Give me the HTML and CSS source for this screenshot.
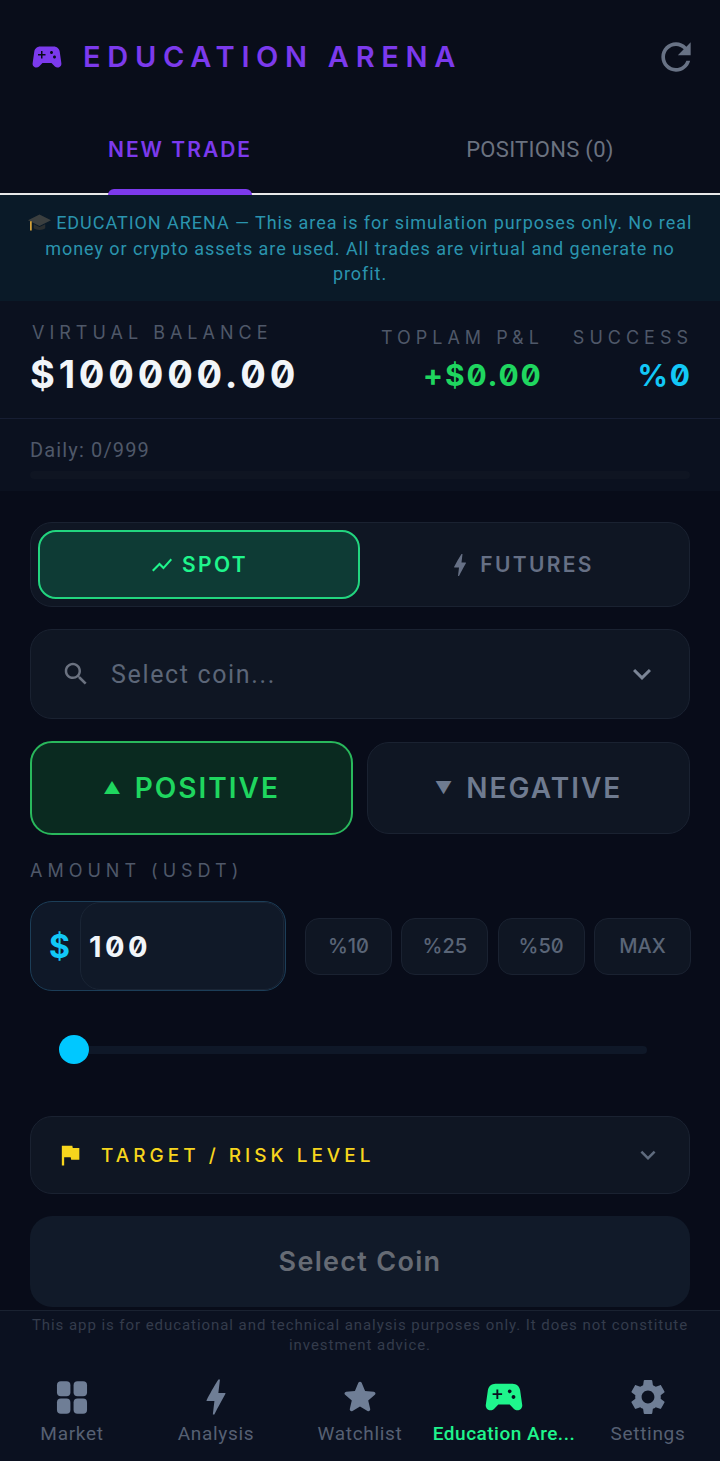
FILE: index.html
```html
<!DOCTYPE html>
<html lang="en">
<head>
    <meta charset="UTF-8">
    <meta name="viewport" content="width=device-width, initial-scale=1.0">
    <title>Education Arena</title>
    <link rel="stylesheet" href="styles.css">
</head>
<body>
    <div class="app">
        <header class="topbar">
            <div class="brand">
                <svg class="brand-icon" viewBox="0 0 24 24"><path d="M21.58 16.09l-1.09-7.66C20.21 6.46 18.52 5 16.53 5H7.47C5.48 5 3.79 6.46 3.51 8.43l-1.09 7.66C2.2 17.63 3.39 19 4.94 19c.68 0 1.32-.27 1.8-.75L9 16h6l2.25 2.25c.48.48 1.13.75 1.8.75 1.56 0 2.75-1.37 2.53-2.91zM11 11H9v2H8v-2H6v-1h2V8h1v2h2v1zm4-1c-.55 0-1-.45-1-1s.45-1 1-1 1 .45 1 1-.45 1-1 1zm2 3c-.55 0-1-.45-1-1s.45-1 1-1 1 .45 1 1-.45 1-1 1z"/></svg>
                <h1>EDUCATION ARENA</h1>
            </div>
            <svg class="refresh" viewBox="0 0 24 24"><path d="M17.65 6.35C16.2 4.9 14.21 4 12 4c-4.42 0-7.99 3.58-7.99 8s3.57 8 7.99 8c3.73 0 6.84-2.55 7.73-6h-2.08c-.82 2.33-3.04 4-5.65 4-3.31 0-6-2.69-6-6s2.69-6 6-6c1.66 0 3.14.69 4.22 1.78L13 11h7V4l-2.35 2.35z"/></svg>
        </header>

        <nav class="tabs">
            <div class="tab tab-active"><span class="tab-label">NEW TRADE</span></div>
            <div class="tab"><span class="tab-label">POSITIONS (0)</span></div>
        </nav>

        <div class="notice">
            <svg class="cap" viewBox="0 0 20 20"><path d="M10 3 20 8l-10 5L0 8z" fill="#3b3f3f"/><path d="M5 11.5V15c2.500 2 7.500 2 10 0v-3.500l-5 2.500z" fill="#2b2f30"/><path d="M2.500 9v8" stroke="#d9a43a" stroke-width="1.500" fill="none"/></svg>
            EDUCATION ARENA — This area is for simulation purposes only. No real money or crypto assets are used. All trades are virtual and generate no profit.
        </div>

        <section class="stats">
            <div class="stat stat-main">
                <div class="stat-label">VIRTUAL BALANCE</div>
                <div class="balance">$100000.00</div>
            </div>
            <div class="stat stat-side">
                <div class="stat-label">TOPLAM P&amp;L</div>
                <div class="stat-value green">+$0.00</div>
            </div>
            <div class="stat stat-side">
                <div class="stat-label">SUCCESS</div>
                <div class="stat-value cyan">%0</div>
            </div>
        </section>

        <section class="daily">
            <div class="daily-text">Daily: 0/999</div>
            <div class="daily-bar"></div>
        </section>

        <main class="trade">
            <div class="segment">
                <div class="segment-item segment-active">
                    <svg class="seg-icon" viewBox="0 0 24 24"><path d="M3.500 18.490l6-6.010 4 4L22 6.920l-1.410-1.410-7.090 7.970-4-4L2 16.990z"/></svg>
                    SPOT
                </div>
                <div class="segment-item">
                    <svg class="seg-icon" viewBox="0 0 24 24"><path d="M11 23h-1l1-8.500H6.500c-.58 0-.57-.32-.38-.66.19-.34.05-.08.07-.12C8 10.500 10.500 5.500 13.500 1h1l-1 8.500h4c.49 0 .56.33.47.51l-.07.15C13.500 18 11 23 11 23z"/></svg>
                    FUTURES
                </div>
            </div>

            <div class="coin-select">
                <svg class="search-icon" viewBox="0 0 24 24"><path d="M15.500 14h-.79l-.28-.27C15.410 12.590 16 11.110 16 9.500 16 5.910 13.090 3 9.500 3S3 5.910 3 9.500 5.910 16 9.500 16c1.610 0 3.090-.59 4.230-1.570l.27.28v.79l5 4.990L20.490 19l-4.990-5zm-6 0C7.010 14 5 11.990 5 9.500S7.010 5 9.500 5 14 7.010 14 9.500 11.990 14 9.500 14z"/></svg>
                <span class="coin-placeholder">Select coin...</span>
                <svg class="chevron" viewBox="0 0 24 24"><path d="M7.410 8.590L12 13.170l4.590-4.580L18 10l-6 6-6-6z"/></svg>
            </div>

            <div class="direction">
                <div class="dir-btn dir-active"><span class="arrow">▲</span>POSITIVE</div>
                <div class="dir-btn"><span class="arrow">▼</span>NEGATIVE</div>
            </div>

            <div class="amount-label">AMOUNT (USDT)</div>
            <div class="amount-row">
                <div class="amount-box">
                    <span class="amount-prefix">$</span>
                    <div class="amount-input">100</div>
                </div>
                <div class="chips">
                    <div class="chip">%10</div>
                    <div class="chip">%25</div>
                    <div class="chip">%50</div>
                    <div class="chip chip-max">MAX</div>
                </div>
            </div>

            <div class="slider">
                <div class="slider-thumb"></div>
                <div class="slider-track"></div>
            </div>

            <div class="risk">
                <svg class="flag" viewBox="0 0 24 24"><path d="M14.400 6L14 4H5v17h2v-7h5.600l.4 2h7V6z"/></svg>
                <span class="risk-label">TARGET / RISK LEVEL</span>
                <svg class="chevron chevron-risk" viewBox="0 0 24 24"><path d="M7.410 8.590L12 13.170l4.590-4.580L18 10l-6 6-6-6z"/></svg>
            </div>

            <div class="submit">Select Coin</div>
        </main>

        <footer class="footer">
            <p class="disclaimer">This app is for educational and technical analysis purposes only. It does not constitute investment advice.</p>
            <div class="bottom-nav">
                <div class="nav-item">
                    <svg class="nav-icon" viewBox="0 0 24 24"><rect x="2.500" y="2" width="8.500" height="9.500" rx="2.500"/><rect x="13" y="2" width="8.500" height="9.500" rx="2.500"/><rect x="2.500" y="13" width="8.500" height="9.500" rx="2.500"/><rect x="13" y="13" width="8.500" height="9.500" rx="2.500"/></svg>
                    <span>Market</span>
                </div>
                <div class="nav-item">
                    <svg class="nav-icon" viewBox="0 0 24 24"><path d="M11 23h-1l1-8.500H6.500c-.58 0-.57-.32-.38-.66.19-.34.05-.08.07-.12C8 10.500 10.500 5.500 13.500 1h1l-1 8.500h4c.49 0 .56.33.47.51l-.07.15C13.500 18 11 23 11 23z"/></svg>
                    <span>Analysis</span>
                </div>
                <div class="nav-item">
                    <svg class="nav-icon" viewBox="1.500 1.500 21 21"><path d="M12 17.270l4.150 2.510c.76.46 1.690-.22 1.490-1.080l-1.100-4.720 3.670-3.180c.67-.58.31-1.680-.57-1.750l-4.830-.41-1.890-4.460c-.34-.81-1.500-.81-1.840 0L9.190 8.630l-4.830.41c-.88.07-1.240 1.170-.57 1.750l3.670 3.180-1.100 4.720c-.2.86.73 1.540 1.490 1.080l4.150-2.500z"/></svg>
                    <span>Watchlist</span>
                </div>
                <div class="nav-item nav-active">
                    <svg class="nav-icon" viewBox="2 2 20 20"><path d="M21.580 16.090l-1.090-7.660C20.210 6.460 18.520 5 16.530 5H7.470C5.480 5 3.790 6.460 3.510 8.430l-1.090 7.660C2.200 17.630 3.390 19 4.940 19c.68 0 1.320-.27 1.800-.75L9 16h6l2.250 2.250c.48.48 1.130.75 1.800.75 1.560 0 2.750-1.370 2.530-2.910zM11 11H9v2H8v-2H6v-1h2V8h1v2h2v1zm4-1c-.55 0-1-.45-1-1s.45-1 1-1 1 .45 1 1-.45 1-1 1zm2 3c-.55 0-1-.45-1-1s.45-1 1-1 1 .45 1 1-.45 1-1 1z"/></svg>
                    <span>Education Are...</span>
                </div>
                <div class="nav-item">
                    <svg class="nav-icon" viewBox="1.300 1.300 21.400 21.400"><path d="M19.140 12.940c.04-.3.06-.61.06-.94 0-.32-.02-.64-.07-.94l2.030-1.580c.18-.14.23-.41.12-.61l-1.920-3.320c-.12-.22-.37-.29-.59-.22l-2.390.96c-.5-.38-1.030-.7-1.620-.94l-.36-2.540c-.04-.24-.24-.41-.48-.41h-3.840c-.24 0-.43.17-.47.41l-.36 2.540c-.59.24-1.130.57-1.620.94l-2.390-.96c-.22-.08-.47 0-.59.22L2.740 8.870c-.12.21-.08.47.12.61l2.030 1.580c-.05.3-.09.63-.09.94s.02.64.07.94l-2.030 1.580c-.18.14-.23.41-.12.61l1.920 3.320c.12.22.37.29.59.22l2.390-.96c.5.38 1.030.7 1.620.94l.36 2.540c.05.24.24.41.48.41h3.840c.24 0 .44-.17.47-.41l.36-2.540c.59-.24 1.130-.56 1.620-.94l2.390.96c.22.08.47 0 .59-.22l1.920-3.320c.12-.22.07-.47-.12-.61l-2.010-1.580zM12 15.600c-1.980 0-3.600-1.620-3.600-3.600s1.620-3.600 3.600-3.600 3.600 1.620 3.600 3.600-1.620 3.600-3.600 3.600z"/></svg>
                    <span>Settings</span>
                </div>
            </div>
        </footer>
    </div>
</body>
</html>
```

FILE: styles.css
```css
:root {
    --bg: #090d1a;
    --card: #0f1623;
    --card-border: #1a2231;
    --purple: #7c3aed;
    --green: #1fd65f;
    --mint: #1ff58c;
    --cyan: #12c8f7;
    --yellow: #f7d51d;
}

* {
    box-sizing: border-box;
}

body {
    margin: 0;
    background: var(--bg);
    font-family: Roboto, "Liberation Sans", sans-serif;
}

.app {
    width: 720px;
    height: 1461px;
    overflow: hidden;
    display: flex;
    flex-direction: column;
}

/* shared "tech" look: wide, slashed zero */
h1, .tab-active .tab-label, .stat-label, .balance, .stat-value, .segment-item, .dir-btn,
.amount-label, .amount-prefix, .amount-input, .chip, .risk-label, .submit {
    font-family: Inter, "DejaVu Sans", sans-serif;
    font-feature-settings: "zero";
}

.topbar {
    height: 113px;
    padding: 0 22px 0 29px;
    display: flex;
    align-items: center;
    justify-content: space-between;
}

.brand {
    display: flex;
    align-items: center;
    gap: 18px;
}

.brand-icon {
    width: 36px;
    height: 36px;
    fill: var(--purple);
}

h1 {
    margin: 0;
    font-size: 29px;
    font-weight: 600;
    letter-spacing: 6.700px;
    color: var(--purple);
}

.refresh {
    width: 44px;
    height: 44px;
    fill: #687285;
}

.tabs {
    height: 82px;
    display: flex;
    border-bottom: 2px solid #e8e8e8;
}

.tab {
    flex: 1;
    display: flex;
    justify-content: center;
}

.tab-label {
    height: 82px;
    padding-top: 24px;
    font-size: 22px;
    letter-spacing: 0.300px;
    color: #6b7280;
}

.tab-active .tab-label {
    display: flex;
    flex-direction: column;
    font-size: 21px;
    font-weight: 600;
    letter-spacing: 2px;
    padding-top: 24px;
    color: var(--purple);
}

.tab-active .tab-label::after {
    content: "";
    height: 6px;
    margin-top: auto;
    background: var(--purple);
    border-radius: 6px 6px 0 0;
}

.notice {
    height: 106px;
    padding: 15px 24px 0;
    background: #0a1a28;
    color: #2a94ae;
    font-size: 18px;
    line-height: 25.500px;
    letter-spacing: 0.950px;
    text-align: center;
}

.cap {
    width: 23px;
    height: 23px;
    vertical-align: -5px;
}

.stats {
    height: 118px;
    padding: 0 30px 0;
    background: #0b111f;
    border-bottom: 1px solid #171e33;
    display: flex;
    align-items: flex-start;
}

.stat-main {
    flex: 1;
    padding-top: 21px;
}

.stat-main .stat-label {
    padding-left: 2px;
}

.stat-side {
    margin-left: 32px;
    padding-top: 26px;
    text-align: right;
}

.stat-label {
    font-size: 18px;
    font-weight: 400;
    letter-spacing: 5px;
    color: #4f5869;
}

.stat-side .stat-label {
    margin-right: -3px;
}

.balance {
    margin-top: 8px;
    font-size: 38px;
    font-weight: 700;
    letter-spacing: 3.800px;
    color: #f1f5f9;
}

.stat-value {
    margin: 11px -1.800px 0 0;
    font-size: 30px;
    font-weight: 700;
    line-height: 32px;
    letter-spacing: 1.800px;
}

.green {
    color: var(--green);
}

.cyan {
    color: var(--cyan);
}

.daily {
    height: 72px;
    padding: 18px 30px 0;
    background: #0b111f;
}

.daily-text {
    font-size: 20px;
    line-height: 26px;
    letter-spacing: 1.150px;
    color: #4f5869;
}

.daily-bar {
    height: 8px;
    margin-top: 8px;
    background: #0f1522;
    border-radius: 4px;
}

.trade {
    flex: 1;
    padding: 31px 30px 0;
    background: #080c19;
    display: flex;
    flex-direction: column;
}

.segment {
    height: 85px;
    padding: 7px;
    display: flex;
    background: var(--card);
    border: 1px solid var(--card-border);
    border-radius: 22px;
}

.segment-item {
    flex: 0 0 322px;
    display: flex;
    align-items: center;
    justify-content: center;
    gap: 8px;
    font-size: 21px;
    font-weight: 600;
    letter-spacing: 2.300px;
    color: #667085;
}

.seg-icon {
    width: 24px;
    height: 24px;
    fill: currentColor;
}

.segment-active {
    color: var(--mint);
    background: #0e3b35;
    border: 2px solid #22d57f;
    border-radius: 18px;
}

.coin-select {
    height: 90px;
    margin-top: 22px;
    padding: 0 29px 0 30px;
    display: flex;
    align-items: center;
    background: var(--card);
    border: 1px solid var(--card-border);
    border-radius: 22px;
}

.search-icon {
    width: 30px;
    height: 30px;
    fill: #6b7280;
}

.coin-placeholder {
    flex: 1;
    margin-left: 20px;
    font-size: 25px;
    letter-spacing: 1.650px;
    color: #5c6678;
}

.chevron {
    width: 36px;
    height: 36px;
    fill: #7b8596;
}

.direction {
    height: 94px;
    margin-top: 22px;
    display: flex;
    align-items: center;
    justify-content: space-between;
}

.dir-btn {
    flex: 0 0 323px;
    height: 92px;
    display: flex;
    align-items: center;
    justify-content: center;
    font-size: 28px;
    font-weight: 600;
    letter-spacing: 2px;
    color: #6f7b90;
    background: var(--card);
    border: 1px solid var(--card-border);
    border-radius: 22px;
}

.dir-active {
    height: 94px;
    color: var(--green);
    background: #0a2a20;
    border: 2px solid #29b85c;
}

.arrow {
    margin-right: 12px;
    font-size: 17px;
}

.amount-label {
    margin-top: 24px;
    font-size: 18px;
    line-height: 24px;
    letter-spacing: 5px;
    color: #4f5869;
}

.amount-row {
    margin-top: 18px;
    display: flex;
    align-items: center;
}

.amount-box {
    flex: 0 0 256px;
    height: 90px;
    display: flex;
    align-items: center;
    background: #0f1828;
    border: 1px solid #1c3e58;
    border-radius: 22px;
}

.amount-prefix {
    width: 49px;
    padding-left: 18px;
    font-size: 32px;
    font-weight: 700;
    color: var(--cyan);
}

.amount-input {
    flex: 1;
    height: 88px;
    margin-right: 1px;
    padding-left: 8px;
    display: flex;
    align-items: center;
    font-size: 29px;
    font-weight: 700;
    letter-spacing: 3.500px;
    color: #f1f5f9;
    background: #101928;
    border: 1px solid #1a2535;
    border-radius: 20px;
}

.chips {
    flex: none;
    margin-left: 19px;
    display: flex;
    gap: 9.330px;
}

.chip {
    width: 87px;
    height: 57px;
    display: flex;
    align-items: center;
    justify-content: center;
    font-size: 20px;
    font-weight: 500;
    color: #5a6577;
    background: var(--card);
    border: 1px solid var(--card-border);
    border-radius: 14px;
}

.chip-max {
    width: 97px;
}

.slider {
    height: 29px;
    margin: 44px 43px 0 29px;
    display: flex;
    align-items: center;
}

.slider-thumb {
    width: 30px;
    height: 29px;
    background: #00c8ff;
    border-radius: 50%;
}

.slider-track {
    flex: 1;
    height: 8px;
    background: #0f1828;
    border-radius: 0 4px 4px 0;
}

.risk {
    height: 78px;
    margin-top: 52px;
    padding: 0 26px 0 25px;
    display: flex;
    align-items: center;
    background: var(--card);
    border: 1px solid var(--card-border);
    border-radius: 22px;
}

.flag {
    width: 28px;
    height: 28px;
    fill: var(--yellow);
}

.risk-label {
    flex: 1;
    margin-left: 17px;
    font-size: 19px;
    font-weight: 500;
    letter-spacing: 4px;
    color: var(--yellow);
}

.chevron-risk {
    width: 30px;
    height: 30px;
    fill: #5f6b7e;
}

.submit {
    height: 91px;
    margin-top: 22px;
    flex-shrink: 0;
    display: flex;
    align-items: center;
    justify-content: center;
    font-size: 27px;
    font-weight: 600;
    letter-spacing: 1.300px;
    color: #666b74;
    background: #111a29;
    border-radius: 22px;
}

.footer {
    height: 151px;
    flex-shrink: 0;
    background: #0b1120;
    border-top: 1px solid #1a2231;
}

.disclaimer {
    margin: 4px 24px 0;
    font-size: 15px;
    line-height: 20px;
    letter-spacing: 0.940px;
    text-align: center;
    color: #343c4c;
}

.bottom-nav {
    margin-top: 23px;
    display: flex;
}

.nav-item {
    width: 144px;
    display: flex;
    flex-direction: column;
    align-items: center;
    font-size: 19px;
    line-height: 24px;
    letter-spacing: 0.700px;
    color: #566073;
}

.nav-icon {
    width: 38px;
    height: 38px;
    margin-bottom: 6px;
    fill: #6f7e96;
}

.nav-active {
    color: var(--mint);
    font-weight: 500;
    letter-spacing: 0.500px;
}

.nav-active .nav-icon {
    fill: var(--mint);
}
```
